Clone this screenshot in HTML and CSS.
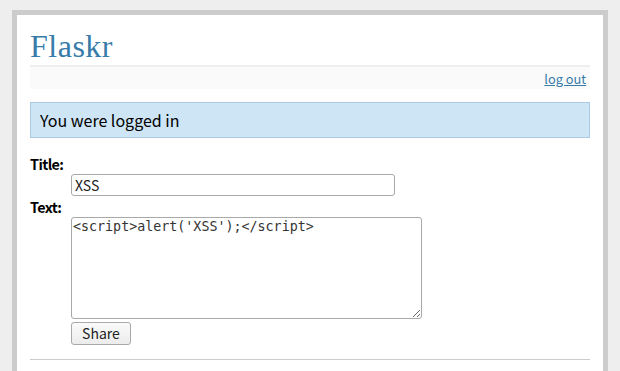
FILE: index.html
```html
<!DOCTYPE html>
<html lang="en">
<head>
    <meta charset="UTF-8">
    <title>Flaskr</title>
    <link rel="stylesheet" href="styles.css">
</head>
<body>
    <div class="page">
        <h1>Flaskr</h1>
        <div class="metanav">
            <a href="#">log out</a>
        </div>
        <div class="flash">You were logged in</div>
        <form class="add-entry">
            <dl>
                <dt>Title:</dt>
                <dd><input type="text" name="title" class="title-input" value="XSS"></dd>
                <dt>Text:</dt>
                <dd><textarea name="text" class="text-input"><script>alert('XSS');</script></textarea></dd>
                <dd><input type="submit" class="share" value="Share"></dd>
            </dl>
        </form>
    </div>
</body>
</html>
```

FILE: styles.css
```css
body {
    font-family: "Noto Sans CJK KR", "Noto Sans", sans-serif;
    background: #eee;
    margin: 10px 8px;
}
a, h1, h2 {
    color: #377ba8;
}
h1, h2 {
    font-family: "Liberation Serif", Georgia, serif;
    font-weight: normal;
    margin: 0;
}
h1 {
    font-size: 2em;
    line-height: 37px;
    letter-spacing: 0.5px;
    border-bottom: 2px solid #eee;
}
.page {
    margin: 0 auto;
    width: 35em;
    border: 5px solid #ccc;
    padding: 0.8em;
    background: white;
}
.metanav {
    text-align: right;
    font-size: 0.8em;
    line-height: 15px;
    padding: 0.3em;
    margin-bottom: 1em;
    background: #fafafa;
}
.flash {
    background: #cee5f5;
    padding: 0.5em 9px;
    line-height: 18px;
    border: 1px solid #aacbe2;
}
.add-entry {
    font-size: 0.9em;
    border-bottom: 1px solid #ccc;
}
.add-entry dl {
    font-weight: bold;
    margin: 1em 0;
}
.add-entry dt {
    line-height: 21px;
    letter-spacing: -0.6px;
}
.add-entry dd {
    margin-left: 41px;
}
.title-input {
    box-sizing: border-box;
    width: 324px;
    height: 22px;
    margin: 0;
    padding: 1px 3px;
    border: 1px solid #a9a9a9;
    border-radius: 3px;
    font-family: "Noto Sans CJK KR", "Noto Sans", sans-serif;
    font-size: 14px;
    color: #222;
}
.text-input {
    box-sizing: border-box;
    width: 351px;
    height: 102px;
    margin: 0;
    padding: 1px 1px;
    border: 1px solid #a9a9a9;
    border-radius: 3px;
    font-family: "DejaVu Sans Mono", monospace;
    font-size: 13.33px;
    line-height: 16px;
    color: #333;
    vertical-align: bottom;
    resize: both;
}
.add-entry dd + dd {
    margin-top: 3px;
    line-height: 23px;
}
.share {
    box-sizing: border-box;
    width: 60px;
    height: 23px;
    margin: 0;
    padding: 0;
    border: 1px solid #a9a9a9;
    border-radius: 3px;
    background: linear-gradient(#fafafa, #ececec);
    font-family: "Noto Sans CJK KR", "Noto Sans", sans-serif;
    font-size: 14px;
    color: #222;
    vertical-align: top;
}
```
